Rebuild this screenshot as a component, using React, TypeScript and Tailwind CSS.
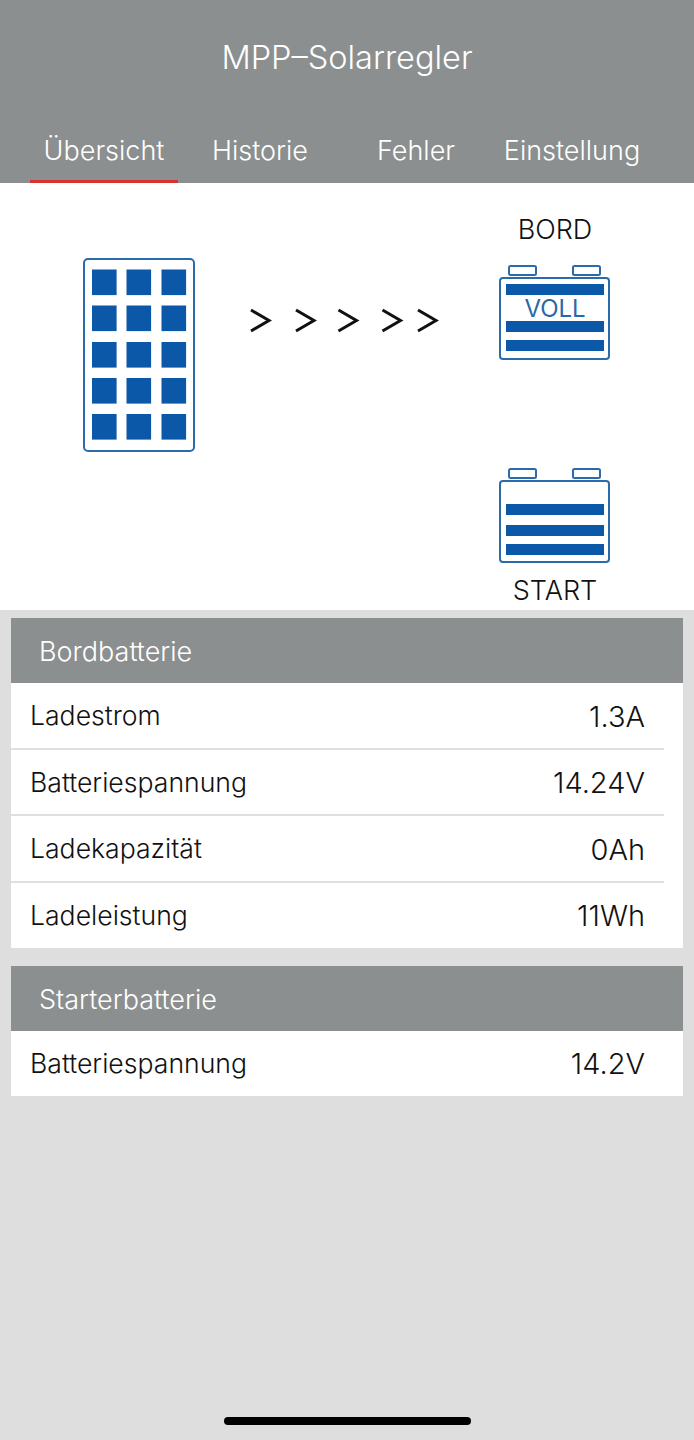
const font = { fontFamily: '"Inter", "Liberation Sans", sans-serif' };

const tabs = ["Übersicht", "Historie", "Fehler", "Einstellung"];

const bordRows = [
  { label: "Ladestrom", value: "1.3A" },
  { label: "Batteriespannung", value: "14.24V" },
  { label: "Ladekapazität", value: "0Ah" },
  { label: "Ladeleistung", value: "11Wh" },
];

const starterRows = [{ label: "Batteriespannung", value: "14.2V" }];

function SolarPanel() {
  const xs = [9, 43.5, 78.5];
  const ys = [11.5, 47.5, 84, 120, 156];
  return (
    <svg width="112" height="194" viewBox="0 0 112 194" className="block">
      <rect x="1" y="1" width="110" height="192" rx="4" fill="none" stroke="#2a6cab" strokeWidth="2" />
      {ys.map((y) =>
        xs.map((x) => <rect key={`${x}-${y}`} x={x} y={y} width="24.6" height="25.6" fill="#0b57a8" />)
      )}
    </svg>
  );
}

function Chevrons() {
  const xs = [1, 46, 88.5, 132.5, 168];
  return (
    <svg width="192" height="26" viewBox="0 0 192 26" className="block">
      {xs.map((x) => (
        <path key={x} d={`M${x + 1} 2 L${x + 19} 12.5 L${x + 1} 23`} fill="none" stroke="#111" strokeWidth="3" />
      ))}
    </svg>
  );
}

function Battery({ bars, full }: { bars: number[]; full?: boolean }) {
  return (
    <svg width="112" height="96" viewBox="0 0 112 96" className="block">
      <rect x="10" y="1" width="27" height="9" rx="1.5" fill="none" stroke="#2a6cab" strokeWidth="2" />
      <rect x="74" y="1" width="27" height="9" rx="1.5" fill="none" stroke="#2a6cab" strokeWidth="2" />
      <rect x="1" y="13" width="109" height="81" rx="3" fill="none" stroke="#2a6cab" strokeWidth="2" />
      {bars.map((y) => (
        <rect key={y} x="7" y={y} width="98" height="11" fill="#0b57a8" />
      ))}
      {full && (
        <text x="56" y="52" textAnchor="middle" fontSize="24" fontWeight="400" fill="#2a68a8" style={font}>
          VOLL
        </text>
      )}
    </svg>
  );
}

function Panel({ title, rows }: { title: string; rows: { label: string; value: string }[] }) {
  return (
    <div className="mx-[11px] bg-white">
      <div className="flex h-[65px] items-center bg-[#8b8f8f] pl-[28px] pt-[4px] text-[27px] text-white">{title}</div>
      {rows.map((row, i) => {
        const last = i === rows.length - 1;
        return (
          <div key={i} className={last ? "mr-[19px]" : "mr-[19px] border-b-2 border-[#dfdfdf]"}>
            <div
              className={
                last
                  ? "flex h-[65px] items-center justify-between pl-[19px] pr-[19px] pt-[2px] text-[#111]"
                  : "flex h-[64.5px] items-center justify-between pl-[19px] pr-[19px] pt-[2px] text-[#111]"
              }
            >
              <span className="text-[26.6px]">{row.label}</span>
              <span className="text-[29px]">{row.value}</span>
            </div>
          </div>
        );
      })}
    </div>
  );
}

export default function App() {
  return (
    <div className="relative h-[1440px] w-[694px] overflow-hidden bg-[#dedede] font-light" style={font}>
      {/* Header */}
      <div className="h-[183px] bg-[#8b8f8f] text-white">
        <div className="pt-[36px] text-center text-[32.5px] leading-[44px]">MPP–Solarregler</div>
        <div className="mt-[38px] grid grid-cols-4 pl-[26px] pr-[44px]">
          {tabs.map((tab, i) => (
            <div
              key={tab}
              className={
                i === 0
                  ? "mx-1 h-[65px] whitespace-nowrap border-b-[3px] border-[#d9302f] text-center text-[27px] leading-[66px]"
                  : "mx-1 h-[65px] whitespace-nowrap text-center text-[27px] leading-[66px]"
              }
            >
              {tab}
            </div>
          ))}
        </div>
      </div>

      {/* Diagram */}
      <div className="flex h-[427px] bg-white">
        <div className="ml-[83px] mt-[75px]">
          <SolarPanel />
        </div>
        <div className="ml-[54px] mt-[125px]">
          <Chevrons />
        </div>
        <div className="ml-[59px] flex w-[110px] flex-col items-center">
          <div className="mt-[29px] whitespace-nowrap text-[27px] leading-[36px] text-[#111]">BORD</div>
          <div className="mt-[17px]">
            <Battery bars={[19, 56, 75]} full />
          </div>
          <div className="mt-[107px]">
            <Battery bars={[36, 57, 76]} />
          </div>
          <div className="mt-[9px] whitespace-nowrap text-[27px] leading-[36px] text-[#111]">START</div>
        </div>
      </div>

      {/* Battery tables */}
      <div className="mt-[8px]">
        <Panel title="Bordbatterie" rows={bordRows} />
      </div>
      <div className="mt-[18px]">
        <Panel title="Starterbatterie" rows={starterRows} />
      </div>

      {/* Home indicator */}
      <div className="absolute bottom-[15px] left-[224px] h-[8px] w-[247px] rounded-full bg-black" />
    </div>
  );
}
